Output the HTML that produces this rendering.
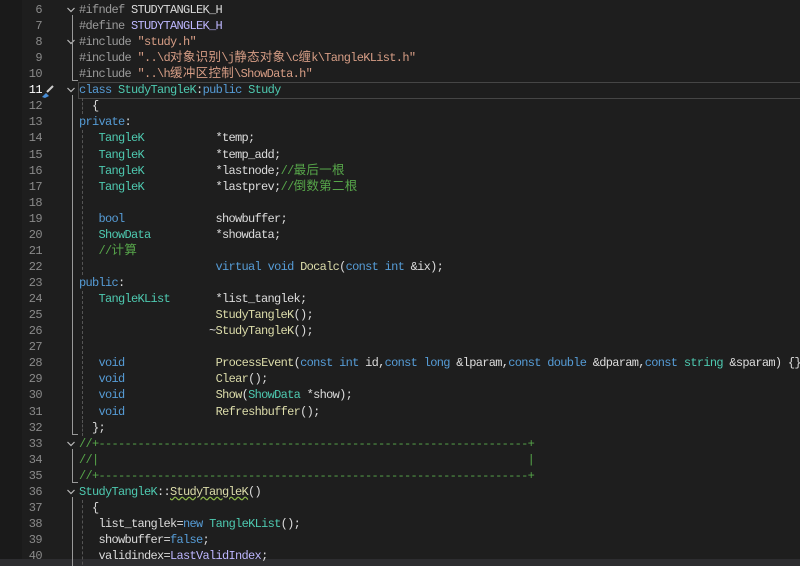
<!DOCTYPE html>
<html><head><meta charset="utf-8"><style>
html,body{margin:0;width:800px;height:566px;overflow:hidden;}
body{background:#1e1e1e;position:relative;font-family:"Liberation Mono","Noto Sans CJK SC",monospace;}
.ln{position:absolute;left:0;width:42px;text-align:right;color:#8a8a8a;font-size:12px;line-height:16px;letter-spacing:-0.6px;}
.c{position:absolute;left:79px;white-space:pre;font-size:12px;line-height:16px;height:16px;letter-spacing:-0.7px;color:#dcdcdc;}
.z{font-size:12.5px;letter-spacing:0.3px;line-height:16px}
.pp{color:#9b9b9b}.mc{color:#beb7ff}.s{color:#d69d85}.k{color:#569cd6}.t{color:#4ec9b0}.cm{color:#57a64a}.f{color:#dcdcaa}.v{color:#dadada}
.fold{position:absolute;left:66px;width:10px;height:16px}
.gl{position:absolute;left:72px;width:1px;background:#999}
.dl{position:absolute;width:0;border-left:1px dashed #555}
</style></head><body>
<div style="position:absolute;left:0;top:0;width:22px;height:560px;background:#1a1a1a"></div>
<div style="position:absolute;left:78px;top:82px;width:722px;height:15px;border:1px solid #464646"></div>
<div style="position:absolute;left:0;top:559px;width:800px;height:7px;background:#2d2d30"></div>
<div id="g"></div>
<script>
const S=n=>' '.repeat(n);
const L=[
[6,'<span class="pp">#ifndef</span> <span class="v">STUDYTANGLEK_H</span>',1],
[7,'<span class="pp">#define</span> <span class="mc">STUDYTANGLEK_H</span>'],
[8,'<span class="pp">#include</span> <span class="s">"study.h"</span>',1],
[9,'<span class="pp">#include</span> <span class="s">"..\\d<span class="z">对象识别</span>\\j<span class="z">静态对象</span>\\c<span class="z">缠</span>k\\TangleKList.h"</span>'],
[10,'<span class="pp">#include</span> <span class="s">"..\\h<span class="z">缓冲区控制</span>\\ShowData.h"</span>'],
[11,'<span class="k">class</span> <span class="t">StudyTangleK</span>:<span class="k">public</span> <span class="t">Study</span>',1],
[12,'  {'],
[13,'<span class="k">private</span>:'],
[14,'   <span class="t">TangleK</span>'+S(11)+'*temp;'],
[15,'   <span class="t">TangleK</span>'+S(11)+'*temp_add;'],
[16,'   <span class="t">TangleK</span>'+S(11)+'*lastnode;<span class="cm">//<span class="z">最后一根</span></span>'],
[17,'   <span class="t">TangleK</span>'+S(11)+'*lastprev;<span class="cm">//<span class="z">倒数第二根</span></span>'],
[18,''],
[19,'   <span class="k">bool</span>'+S(14)+'showbuffer;'],
[20,'   <span class="t">ShowData</span>'+S(10)+'*showdata;'],
[21,'   <span class="cm">//<span class="z">计算</span></span>'],
[22,S(21)+'<span class="k">virtual</span> <span class="k">void</span> <span class="f">Docalc</span>(<span class="k">const</span> <span class="k">int</span> &amp;ix);'],
[23,'<span class="k">public</span>:'],
[24,'   <span class="t">TangleKList</span>'+S(7)+'*list_tanglek;'],
[25,S(21)+'<span class="f">StudyTangleK</span>();'],
[26,S(20)+'~<span class="f">StudyTangleK</span>();'],
[27,''],
[28,'   <span class="k">void</span>'+S(14)+'<span class="f">ProcessEvent</span>(<span class="k">const</span> <span class="k">int</span> id,<span class="k">const</span> <span class="k">long</span> &amp;lparam,<span class="k">const</span> <span class="k">double</span> &amp;dparam,<span class="k">const</span> <span class="t">string</span> &amp;sparam) {}'],
[29,'   <span class="k">void</span>'+S(14)+'<span class="f">Clear</span>();'],
[30,'   <span class="k">void</span>'+S(14)+'<span class="f">Show</span>(<span class="t">ShowData</span> *show);'],
[31,'   <span class="k">void</span>'+S(14)+'<span class="f">Refreshbuffer</span>();'],
[32,'  };'],
[33,'<span class="cm">//+'+'-'.repeat(66)+'+</span>',1],
[34,'<span class="cm">//|'+' '.repeat(66)+'|</span>'],
[35,'<span class="cm">//+'+'-'.repeat(66)+'+</span>'],
[36,'<span class="t">StudyTangleK</span>::<span class="f" style="text-decoration:underline wavy #8fb94a">StudyTangleK</span>()',1],
[37,'  {'],
[38,'   list_tanglek=<span class="k">new</span> <span class="t">TangleKList</span>();'],
[39,'   showbuffer=<span class="k">false</span>;'],
[40,'   validindex=<span class="mc">LastValidIndex</span>;'],
];
let h='';
L.forEach(([n,c,f])=>{const y=2+(n-6)*16.06;
h+=`<div class="ln" style="top:${y}px;${n==11?'color:#fff':''}">${n}</div><div class="c" style="top:${y}px">${c}</div>`;
if(f)h+=`<svg class="fold" style="top:${y}px" viewBox="0 0 10 16"><path d="M1.5 6 L5 9.5 L8.5 6" fill="none" stroke="#bbb" stroke-width="1.2"/></svg>`;});
function gl(a,b){const y1=2+(a-6)*16.06+13,y2=2+(b-6)*16.06+14;h+=`<div class="gl" style="top:${y1}px;height:${y2-y1}px"></div><div style="position:absolute;left:72px;top:${y2}px;width:6px;height:1px;background:#999"></div>`;}
gl(6,10);gl(11,32);gl(33,35);gl(36,41);
function dl(x,a,b){const y1=2+(a-6)*16.06,y2=2+(b-6)*16.06+16;h+=`<div class="dl" style="left:${x}px;top:${y1}px;height:${y2-y1}px"></div>`;}
dl(82,12,12);dl(82,14,22);dl(82,24,31);dl(82,32,32);dl(82,37,41);
h+=`<svg style="position:absolute;left:40px;top:83px" width="16" height="16" viewBox="0 0 16 16"><path d="M2 14 L6 10 L9 13 L5 15 Z" fill="#4a8fd8"/><path d="M7 9 L13 3" stroke="#ccc" stroke-width="2"/></svg>`;
document.getElementById('g').innerHTML=h;
</script>
</body></html>
